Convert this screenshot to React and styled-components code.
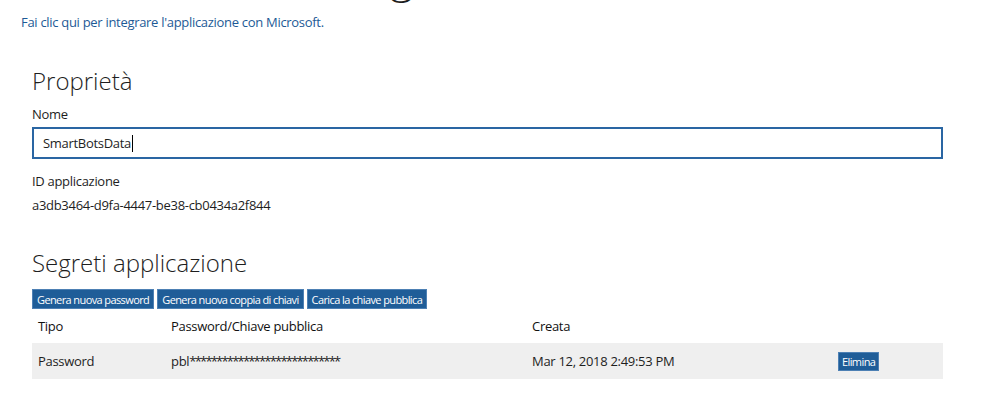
import React from 'react';
import styled, { createGlobalStyle } from 'styled-components';

const GlobalStyle = createGlobalStyle`
  html, body {
    margin: 0;
    padding: 0;
    background: #fff;
    font-family: "Open Sans", "Noto Sans", "Liberation Sans", sans-serif;
    color: #1e1e1e;
    overflow: hidden;
  }
`;

const Page = styled.div`
  width: 1004px;
  height: 398px;
  overflow: hidden;
  padding-left: 21px;
  box-sizing: border-box;
  letter-spacing: -0.3px;
`;

const AppTitle = styled.h1`
  margin: -52px 0 0;
  font-size: 45px;
  line-height: 56px;
  font-weight: 300;
  letter-spacing: 0;
  white-space: nowrap;
`;

const IntegrateLink = styled.a`
  display: block;
  margin-top: 9px;
  font-size: 13px;
  line-height: 18px;
  color: #1d5a96;
  text-decoration: none;
`;

const Section = styled.section`
  width: 911px;
  margin-left: 11px;
  margin-top: ${(p) => p.$top}px;
`;

const SectionTitle = styled.h2`
  margin: 0;
  font-size: 24px;
  line-height: 32px;
  font-weight: 300;
  letter-spacing: 0;
  color: #1e1e1e;
`;

const Label = styled.div`
  font-size: 13px;
  line-height: 18px;
  margin-top: ${(p) => p.$top || 0}px;
`;

const Value = styled.div`
  font-size: 13px;
  line-height: 18px;
  margin-top: 6px;
`;

const NameField = styled.div`
  display: flex;
  align-items: center;
  width: 100%;
  box-sizing: border-box;
  height: 32px;
  margin-top: 4px;
  padding: 0 9px;
  border: 2px solid #2a66a3;
  font-size: 13px;
  color: #1e1e1e;
`;

const Caret = styled.span`
  display: inline-block;
  width: 1px;
  height: 17px;
  margin-left: 1px;
  background: #000;
`;

const ButtonRow = styled.div`
  display: flex;
  gap: 3px;
  margin-top: 10px;
`;

const Button = styled.button`
  height: ${(p) => (p.$small ? 19 : 20)}px;
  padding: 0 ${(p) => (p.$small ? 3 : 4)}px;
  background: #1f5d98;
  border: 1px solid #4d80b4;
  color: #fff;
  font-family: inherit;
  font-size: 11px;
  letter-spacing: -0.6px;
  line-height: 17px;
  cursor: pointer;
`;

const Row = styled.div`
  display: grid;
  grid-template-columns: 133px 361px 306px 1fr;
  align-items: center;
  height: ${(p) => p.$h}px;
  padding-left: 6px;
  background: ${(p) => (p.$shade ? '#efefef' : 'transparent')};
  font-size: 13px;
`;

const HeadCell = styled.div`
  font-weight: 500;
  color: #111;
`;

const Cell = styled.div`
  color: #1e1e1e;
`;

const Stars = styled.span`
  letter-spacing: -1.8px;
`;

export default function App() {
  return (
    <>
      <GlobalStyle />
      <Page>
        <AppTitle>SmartBotsData Registrazione</AppTitle>
        <IntegrateLink href="#">Fai clic qui per integrare l'applicazione con Microsoft.</IntegrateLink>

        <Section $top={34}>
          <SectionTitle>Proprietà</SectionTitle>
          <Label $top={8}>Nome</Label>
          <NameField role="textbox">
            SmartBotsData
            <Caret />
          </NameField>
          <Label $top={13}>ID applicazione</Label>
          <Value>a3db3464-d9fa-4447-be38-cb0434a2f844</Value>
        </Section>

        <Section $top={33}>
          <SectionTitle>Segreti applicazione</SectionTitle>
          <ButtonRow>
            <Button>Genera nuova password</Button>
            <Button>Genera nuova coppia di chiavi</Button>
            <Button>Carica la chiave pubblica</Button>
          </ButtonRow>
          <Row $h={34}>
            <HeadCell>Tipo</HeadCell>
            <HeadCell>Password/Chiave pubblica</HeadCell>
            <HeadCell>Creata</HeadCell>
            <div />
          </Row>
          <Row $h={36} $shade>
            <Cell>Password</Cell>
            <Cell>
              pbl<Stars>****************************</Stars>
            </Cell>
            <Cell>Mar 12, 2018 2:49:53 PM</Cell>
            <div>
              <Button $small>Elimina</Button>
            </div>
          </Row>
        </Section>
      </Page>
    </>
  );
}
